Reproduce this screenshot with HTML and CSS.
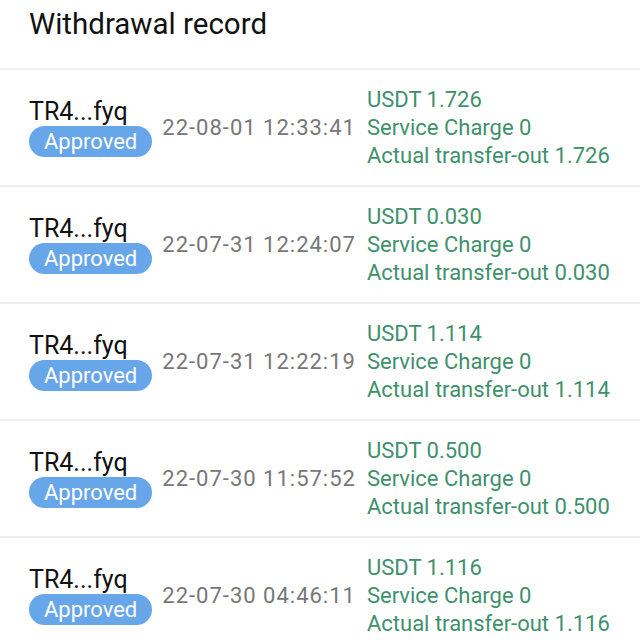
FILE: index.html
```html
<!DOCTYPE html>
<html>
    <head>
        <title> Withdrawal record </title>
        <meta name="viewport" content="width=device-width, initial-scale=1.0">
        <link rel="stylesheet" href="styles.css">
    </head>
    <body>
        <header class="top-bar">
            <h1>Withdrawal record</h1>
        </header>

        <ul class="records">
            <li class="record">
                <div class="address">
                    <span class="addr-text">TR4...fyq</span>
                    <span class="status">Approved</span>
                </div>
                <div class="date">22-08-01 12:33:41</div>
                <div class="amounts">
                    <span>USDT 1.726</span>
                    <span>Service Charge 0</span>
                    <span>Actual transfer-out 1.726</span>
                </div>
            </li>
            <li class="record">
                <div class="address">
                    <span class="addr-text">TR4...fyq</span>
                    <span class="status">Approved</span>
                </div>
                <div class="date">22-07-31 12:24:07</div>
                <div class="amounts">
                    <span>USDT 0.030</span>
                    <span>Service Charge 0</span>
                    <span>Actual transfer-out 0.030</span>
                </div>
            </li>
            <li class="record">
                <div class="address">
                    <span class="addr-text">TR4...fyq</span>
                    <span class="status">Approved</span>
                </div>
                <div class="date">22-07-31 12:22:19</div>
                <div class="amounts">
                    <span>USDT 1.114</span>
                    <span>Service Charge 0</span>
                    <span>Actual transfer-out 1.114</span>
                </div>
            </li>
            <li class="record">
                <div class="address">
                    <span class="addr-text">TR4...fyq</span>
                    <span class="status">Approved</span>
                </div>
                <div class="date">22-07-30 11:57:52</div>
                <div class="amounts">
                    <span>USDT 0.500</span>
                    <span>Service Charge 0</span>
                    <span>Actual transfer-out 0.500</span>
                </div>
            </li>
            <li class="record">
                <div class="address">
                    <span class="addr-text">TR4...fyq</span>
                    <span class="status">Approved</span>
                </div>
                <div class="date">22-07-30 04:46:11</div>
                <div class="amounts">
                    <span>USDT 1.116</span>
                    <span>Service Charge 0</span>
                    <span>Actual transfer-out 1.116</span>
                </div>
            </li>
        </ul>
    </body>
</html>
```

FILE: styles.css
```css
/* ---- General ---- */
* {
    box-sizing: border-box;
    font-family: Roboto, 'Noto Sans', sans-serif;
}

body {
    background-color: #fff;
    margin: 0;
    overflow: hidden;
}

/* ---- Header ---- */
.top-bar {
    height: 68px;
    padding-left: 29px;
    padding-top: 6px;
}

.top-bar h1 {
    color: #111;
    font-size: 29.5px;
    font-weight: 400;
    line-height: 36px;
    margin: 0;
}

/* ---- Records ---- */
.records {
    list-style: none;
    margin: 0;
    padding: 0;
}

.record {
    align-items: center;
    border-top: 2px solid #eeeeee;
    display: flex;
    gap: 10px;
    height: 117px;
    padding-left: 29px;
}

.address {
    align-items: flex-start;
    display: flex;
    flex-direction: column;
}

.addr-text {
    color: #111;
    font-size: 25px;
    line-height: 28px;
}

.status {
    background-color: #68a6ea;
    border-radius: 16px;
    color: #fff;
    font-size: 22px;
    line-height: 31px;
    padding: 0 15px;
}

.date {
    color: #777;
    font-size: 22px;
    letter-spacing: 1px;
    margin-right: 1px;
}

.amounts {
    color: #3e916c;
    display: flex;
    flex-direction: column;
    font-size: 22px;
    line-height: 28px;
}
```
